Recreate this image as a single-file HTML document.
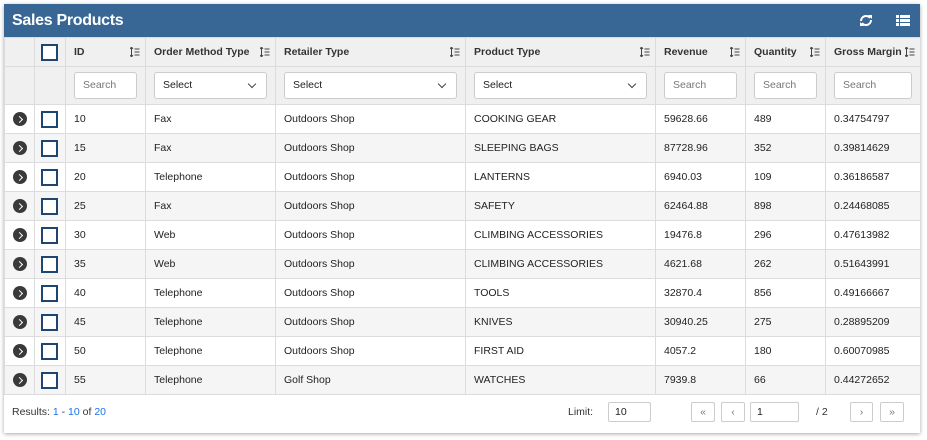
<!DOCTYPE html><html><head><style>
body{margin:0;background:#fff;font-family:"Liberation Sans",sans-serif;width:927px;height:440px;overflow:hidden;position:relative}
.panel{position:absolute;left:4px;top:4px;width:916px;height:429px;box-shadow:0 1px 4px rgba(0,0,0,.35);background:#fff}
.hd{height:33px;background:#386795;color:#fff;font-size:16px;font-weight:bold;line-height:33px;padding-left:8px;letter-spacing:-.3px;position:relative}
table{border-collapse:collapse;table-layout:fixed;width:916px;font-size:10.5px;color:#222}
td,th{border:1px solid #dcdcdc;padding:0 0 0 8px;white-space:nowrap;overflow:hidden}
th{background:#f0f0f0;text-align:left;font-weight:bold;height:28px;font-size:10.5px;position:relative;color:#333}
tr.f td{background:#f0f0f0;height:37px;padding:0 8px}
tbody tr td{height:28px}
tbody tr:nth-child(even) td{background:#f5f5f5}
.s{position:absolute;right:5px;top:9px;width:10px;height:10px}
.cb{display:inline-block;width:13px;height:13px;border:2px solid #1d4670;background:#fff;vertical-align:middle}
.ar{display:inline-block;width:14px;height:14px;border-radius:50%;background:#3a3a3a;vertical-align:middle;position:relative}
.ar:after{content:"";position:absolute;left:4px;top:4.5px;width:4px;height:4px;border-right:1.5px solid #fff;border-top:1.5px solid #fff;transform:rotate(45deg)}
.in{height:27px;border:1px solid #ccc;border-radius:3px;background:#fff;box-sizing:border-box;font-size:10.5px;color:#777;line-height:25px;padding-left:8px;position:relative}
.sel{color:#222}
.sel:after{content:"";position:absolute;right:11px;top:8px;width:5px;height:5px;border-right:1.3px solid #444;border-bottom:1.3px solid #444;transform:rotate(45deg)}
.ft{position:absolute;left:0;top:390px;width:916px;height:39px;font-size:10.5px;color:#333}
.b{position:absolute;top:8px;height:20px;border:1px solid #ccc;border-radius:2px;box-sizing:border-box;background:#fff;text-align:center;line-height:18px;color:#777}
a{color:#1a73e8;text-decoration:none}
</style></head><body><div class="panel">
<div class="hd">Sales Products
<svg style="position:absolute;left:855px;top:9px" width="14" height="15" viewBox="0 0 14 15"><path d="M2 8a5 5 0 0 1 9-3" stroke="#fff" stroke-width="2" fill="none"/><path d="M12 7a5 5 0 0 1-9 3" stroke="#fff" stroke-width="2" fill="none"/><path d="M9 2l4 0 0 4z" fill="#fff"/><path d="M5 13l-4 0 0-4z" fill="#fff"/></svg>
<svg style="position:absolute;left:892px;top:11px" width="14" height="11"><rect x="0" y="0" width="14" height="3" fill="#fff"/><rect x="0" y="4" width="14" height="3" fill="#fff"/><rect x="0" y="8" width="14" height="3" fill="#fff"/><rect x="3" y="0" width="1" height="11" fill="#386795"/></svg>
</div>
<table>
<colgroup><col style="width:30px"><col style="width:31px"><col style="width:80px"><col style="width:130px"><col style="width:190px"><col style="width:190px"><col style="width:90px"><col style="width:80px"><col style="width:95px"></colgroup>
<thead><tr><th></th><th style="padding-left:6px"><span class="cb"></span></th>
<th>ID<svg class="s" viewBox="0 0 10 10"><path d="M1.5 0v10M0 2l1.5-2 1.5 2M0 8l1.5 2 1.5-2M4.5 2h5M4.5 5h5M4.5 8h5" stroke="#444" fill="none"/></svg></th>
<th>Order Method Type<svg class="s" viewBox="0 0 10 10"><path d="M1.5 0v10M0 2l1.5-2 1.5 2M0 8l1.5 2 1.5-2M4.5 2h5M4.5 5h5M4.5 8h5" stroke="#444" fill="none"/></svg></th>
<th>Retailer Type<svg class="s" viewBox="0 0 10 10"><path d="M1.5 0v10M0 2l1.5-2 1.5 2M0 8l1.5 2 1.5-2M4.5 2h5M4.5 5h5M4.5 8h5" stroke="#444" fill="none"/></svg></th>
<th>Product Type<svg class="s" viewBox="0 0 10 10"><path d="M1.5 0v10M0 2l1.5-2 1.5 2M0 8l1.5 2 1.5-2M4.5 2h5M4.5 5h5M4.5 8h5" stroke="#444" fill="none"/></svg></th>
<th>Revenue<svg class="s" viewBox="0 0 10 10"><path d="M1.5 0v10M0 2l1.5-2 1.5 2M0 8l1.5 2 1.5-2M4.5 2h5M4.5 5h5M4.5 8h5" stroke="#444" fill="none"/></svg></th>
<th>Quantity<svg class="s" viewBox="0 0 10 10"><path d="M1.5 0v10M0 2l1.5-2 1.5 2M0 8l1.5 2 1.5-2M4.5 2h5M4.5 5h5M4.5 8h5" stroke="#444" fill="none"/></svg></th>
<th>Gross Margin<svg class="s" viewBox="0 0 10 10"><path d="M1.5 0v10M0 2l1.5-2 1.5 2M0 8l1.5 2 1.5-2M4.5 2h5M4.5 5h5M4.5 8h5" stroke="#444" fill="none"/></svg></th></tr>
<tr class="f"><td></td><td></td><td><div class="in">Search</div></td><td><div class="in sel">Select</div></td><td><div class="in sel">Select</div></td><td><div class="in sel">Select</div></td><td><div class="in">Search</div></td><td><div class="in">Search</div></td><td><div class="in">Search</div></td></tr></thead>
<tbody>
<tr><td><span class="ar"></span></td><td style="padding-left:6px"><span class="cb"></span></td><td>10</td><td>Fax</td><td>Outdoors Shop</td><td>COOKING GEAR</td><td>59628.66</td><td>489</td><td>0.34754797</td></tr>
<tr><td><span class="ar"></span></td><td style="padding-left:6px"><span class="cb"></span></td><td>15</td><td>Fax</td><td>Outdoors Shop</td><td>SLEEPING BAGS</td><td>87728.96</td><td>352</td><td>0.39814629</td></tr>
<tr><td><span class="ar"></span></td><td style="padding-left:6px"><span class="cb"></span></td><td>20</td><td>Telephone</td><td>Outdoors Shop</td><td>LANTERNS</td><td>6940.03</td><td>109</td><td>0.36186587</td></tr>
<tr><td><span class="ar"></span></td><td style="padding-left:6px"><span class="cb"></span></td><td>25</td><td>Fax</td><td>Outdoors Shop</td><td>SAFETY</td><td>62464.88</td><td>898</td><td>0.24468085</td></tr>
<tr><td><span class="ar"></span></td><td style="padding-left:6px"><span class="cb"></span></td><td>30</td><td>Web</td><td>Outdoors Shop</td><td>CLIMBING ACCESSORIES</td><td>19476.8</td><td>296</td><td>0.47613982</td></tr>
<tr><td><span class="ar"></span></td><td style="padding-left:6px"><span class="cb"></span></td><td>35</td><td>Web</td><td>Outdoors Shop</td><td>CLIMBING ACCESSORIES</td><td>4621.68</td><td>262</td><td>0.51643991</td></tr>
<tr><td><span class="ar"></span></td><td style="padding-left:6px"><span class="cb"></span></td><td>40</td><td>Telephone</td><td>Outdoors Shop</td><td>TOOLS</td><td>32870.4</td><td>856</td><td>0.49166667</td></tr>
<tr><td><span class="ar"></span></td><td style="padding-left:6px"><span class="cb"></span></td><td>45</td><td>Telephone</td><td>Outdoors Shop</td><td>KNIVES</td><td>30940.25</td><td>275</td><td>0.28895209</td></tr>
<tr><td><span class="ar"></span></td><td style="padding-left:6px"><span class="cb"></span></td><td>50</td><td>Telephone</td><td>Outdoors Shop</td><td>FIRST AID</td><td>4057.2</td><td>180</td><td>0.60070985</td></tr>
<tr><td><span class="ar"></span></td><td style="padding-left:6px"><span class="cb"></span></td><td>55</td><td>Telephone</td><td>Golf Shop</td><td>WATCHES</td><td>7939.8</td><td>66</td><td>0.44272652</td></tr>
</tbody></table>
<div class="ft">
<div style="position:absolute;left:8px;top:12px">Results: <a>1</a> - <a>10</a> of <a>20</a></div>
<div style="position:absolute;left:564px;top:12px">Limit:</div>
<div class="b" style="left:604px;width:43px;text-align:left;padding-left:6px;color:#222">10</div>
<div class="b" style="left:687px;width:24px">«</div>
<div class="b" style="left:717px;width:24px">‹</div>
<div class="b" style="left:746px;width:49px;text-align:left;padding-left:6px;color:#222">1</div>
<div style="position:absolute;left:812px;top:12px">/ 2</div>
<div class="b" style="left:846px;width:23px">›</div>
<div class="b" style="left:876px;width:24px">»</div>
</div></div></body></html>
